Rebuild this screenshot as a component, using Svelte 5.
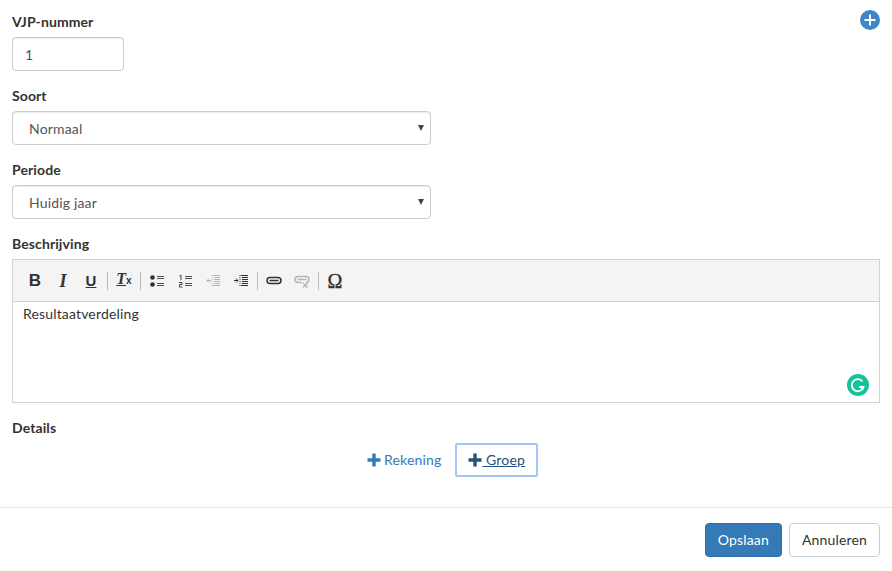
<script>
    let vjpNummer = $state('1');
    let soort = $state('Normaal');
    let periode = $state('Huidig jaar');
</script>

<div class="page">
    <button class="add-vjp" type="button" aria-label="Toevoegen">
        <svg viewBox="0 0 20 20" width="20" height="20">
            <circle cx="10" cy="10" r="10" fill="#3d87c9" />
            <path d="M10 4.5v11M4.5 10h11" stroke="#fff" stroke-width="2" />
        </svg>
    </button>

    <div class="form">
        <div class="form-group">
            <label for="nummer">VJP-nummer</label>
            <input id="nummer" class="control short" bind:value={vjpNummer} />
        </div>
        <div class="form-group">
            <label for="soort">Soort</label>
            <div class="select-wrap">
                <select id="soort" class="control wide" bind:value={soort}>
                    <option>Normaal</option>
                    <option>Afwijkend</option>
                </select>
            </div>
        </div>
        <div class="form-group">
            <label for="periode">Periode</label>
            <div class="select-wrap">
                <select id="periode" class="control wide" bind:value={periode}>
                    <option>Huidig jaar</option>
                    <option>Vorig jaar</option>
                </select>
            </div>
        </div>
        <div class="form-group">
            <div class="label">Beschrijving</div>
            <div class="editor">
                <div class="toolbar">
                    <span class="tool text-b">B</span>
                    <span class="tool text-i">I</span>
                    <span class="tool text-u">U</span>
                    <span class="sep"></span>
                    <span class="tool text-tx"><span class="tx-t">T</span><sub>x</sub></span>
                    <span class="sep"></span>
                    <span class="tool">
                        <svg viewBox="0 0 16 16" width="16" height="16">
                            <circle cx="3.500" cy="4.500" r="2.300" fill="#333" />
                            <circle cx="3.500" cy="11.500" r="2.300" fill="#333" />
                            <path d="M8 3.500h7M8 5.500h7M8 10.500h7M8 12.500h7" stroke="#555" stroke-width="1" />
                        </svg>
                    </span>
                    <span class="tool">
                        <svg viewBox="0 0 16 16" width="16" height="16">
                            <path d="M2.500 3l1.500-.8v5M2 9.500h3v2H2.500v2.500h3" stroke="#444" stroke-width="1" fill="none" />
                            <path d="M8 3.500h7M8 5.500h7M8 10.500h7M8 12.500h7" stroke="#555" stroke-width="1" />
                        </svg>
                    </span>
                    <span class="tool muted">
                        <svg viewBox="0 0 16 16" width="16" height="16">
                            <path d="M8 2.500h7M9 4.500h6M9 6.500h6M9 8.500h6M9 10.500h6M8 12.500h7" stroke="#444" stroke-width="1" />
                            <path d="M7 2v11" stroke="#444" stroke-width="1" stroke-dasharray="1 1" />
                            <path d="M6 7.500H2M4 5.500l-2 2 2 2" stroke="#444" stroke-width="1" fill="none" />
                        </svg>
                    </span>
                    <span class="tool">
                        <svg viewBox="0 0 16 16" width="16" height="16">
                            <path d="M8 2.500h7M9 4.500h6M9 6.500h6M9 8.500h6M9 10.500h6M8 12.500h7" stroke="#333" stroke-width="1" />
                            <path d="M7 2v11" stroke="#333" stroke-width="1" stroke-dasharray="1 1" />
                            <path d="M1 7.500h4M3 5.500l2 2-2 2" stroke="#333" stroke-width="1" fill="none" />
                        </svg>
                    </span>
                    <span class="sep"></span>
                    <span class="tool">
                        <svg viewBox="0 0 16 16" width="16" height="16">
                            <path d="M6 4.500H4a3 3 0 0 0 0 6h2M10 4.500h2a3 3 0 0 1 0 6h-2M6 4.500h4M6 10.500h4" stroke="#333" stroke-width="1.500" fill="none" />
                            <path d="M3.500 7.500h9" stroke="#333" stroke-width="1.500" />
                        </svg>
                    </span>
                    <span class="tool muted">
                        <svg viewBox="0 0 16 16" width="16" height="16">
                            <path d="M6 3.500H4a3 3 0 0 0 0 6h2M10 3.500h2a3 3 0 0 1 0 6M6 3.500h4M6 9.500h2" stroke="#444" stroke-width="1.500" fill="none" />
                            <path d="M3.500 6.500h9" stroke="#444" stroke-width="1.500" />
                            <path d="M9 10l4.500 4.500M13.500 10L9 14.500" stroke="#444" stroke-width="1.500" />
                        </svg>
                    </span>
                    <span class="sep"></span>
                    <span class="tool text-omega">Ω</span>
                </div>
                <div class="editor-body">
                    Resultaatverdeling
                    <span class="grammarly">
                        <svg viewBox="0 0 22 22" width="22" height="22">
                            <circle cx="11" cy="11" r="11" fill="#15c39a" />
                            <path d="M15.500 7.500a6 6 0 1 0 1 5.500h-4.500" stroke="#fff" stroke-width="1.800" fill="none" />
                            <path d="M13.500 14.500l3 1.500v-3z" fill="#fff" />
                        </svg>
                    </span>
                </div>
            </div>
        </div>
        <div class="details">
            <div class="label">Details</div>
            <div class="detail-actions">
                <button class="btn-link" type="button">
                    <svg viewBox="0 0 14 14" width="14" height="14">
                        <path d="M7 .5v13M.5 7h13" stroke="currentColor" stroke-width="3.400" />
                    </svg>
                    <span>Rekening</span>
                </button>
                <button class="btn-link focused" type="button">
                    <svg viewBox="0 0 14 14" width="14" height="14">
                        <path d="M7 .5v13M.5 7h13" stroke="currentColor" stroke-width="3.400" />
                    </svg>
                    <span>&nbsp;Groep</span>
                </button>
            </div>
        </div>
    </div>

    <div class="footer">
        <button class="btn primary" type="button">Opslaan</button>
        <button class="btn" type="button">Annuleren</button>
    </div>
</div>

<style>
    :global(body) {
        background: #fff;
        color: #333;
        font-family: Lato, "Liberation Sans", sans-serif;
        font-size: 14px;
        line-height: 20px;
        letter-spacing: .16px;
    }

    .page {
        position: relative;
        height: 571px;
        overflow: hidden;
    }

    .add-vjp {
        position: absolute;
        top: 10px;
        right: 12px;
        width: 20px;
        height: 20px;
        padding: 0;
        border: 0;
        background: none;
    }

    .add-vjp svg {
        display: block;
    }

    .form {
        padding: 12px 12px 30px;
    }

    .form-group {
        margin-bottom: 15px;
    }

    label,
    .label {
        display: block;
        margin-bottom: 5px;
        font-weight: 700;
        letter-spacing: .1px;
    }

    .control {
        display: block;
        box-sizing: border-box;
        height: 34px;
        padding: 6px 12px;
        border: 1px solid #ccc;
        border-radius: 4px;
        background: #fff;
        color: #555;
        font: inherit;
        letter-spacing: inherit;
        box-shadow: inset 0 1px 1px rgba(0, 0, 0, .075);
    }

    .short {
        width: 112px;
    }

    .wide {
        width: 419px;
        padding: 7px 12px 5px 16px;
        appearance: none;
    }

    .select-wrap {
        position: relative;
        width: 419px;
    }

    .select-wrap::after {
        content: "";
        position: absolute;
        top: 14px;
        right: 7px;
        border-style: solid;
        border-width: 6px 3px 0;
        border-color: #444 transparent transparent;
        pointer-events: none;
    }

    .editor {
        box-sizing: border-box;
        height: 144px;
        border: 1px solid #d1d1d1;
    }

    .toolbar {
        display: flex;
        align-items: center;
        box-sizing: border-box;
        height: 42px;
        padding: 0 8px;
        background: #f4f4f4;
        border-bottom: 1px solid #d1d1d1;
    }

    .tool {
        display: flex;
        align-items: center;
        justify-content: center;
        width: 28px;
        height: 24px;
        color: #333;
        letter-spacing: 0;
    }

    .muted {
        opacity: .35;
    }

    .sep {
        width: 1px;
        height: 18px;
        margin: 0 2px;
        background: #bcbcbc;
    }

    .text-b,
    .text-u {
        font-family: "Liberation Sans", sans-serif;
        font-size: 17px;
        font-weight: 700;
    }

    .text-i {
        font-family: "Liberation Serif", serif;
        font-size: 18px;
        font-style: italic;
        font-weight: 700;
    }

    .text-u {
        text-decoration: underline;
        font-size: 15px;
    }

    .text-tx {
        align-items: baseline;
        font-family: "Liberation Serif", serif;
        font-size: 16px;
        font-style: italic;
        font-weight: 700;
    }

    .tx-t {
        text-decoration: underline;
    }

    .text-tx sub {
        font-family: "Liberation Sans", sans-serif;
        font-size: 10px;
        font-style: normal;
        line-height: 0;
        vertical-align: -2px;
    }

    .text-omega {
        font-family: "Liberation Serif", serif;
        font-size: 20px;
        -webkit-text-stroke: .4px #333;
    }

    .editor-body {
        position: relative;
        padding: 2px 10px;
        height: 100px;
        box-sizing: border-box;
    }

    .grammarly {
        position: absolute;
        right: 10px;
        bottom: 6px;
        width: 22px;
        height: 22px;
    }

    .grammarly svg {
        display: block;
    }

    .detail-actions {
        display: flex;
        justify-content: center;
        gap: 1px;
    }

    .btn-link {
        display: flex;
        align-items: center;
        gap: 3px;
        box-sizing: border-box;
        height: 34px;
        padding: 6px 12px;
        border: 1px solid transparent;
        border-radius: 2px;
        background: none;
        color: #337ab7;
        font: inherit;
        letter-spacing: inherit;
    }

    .focused {
        color: #23527c;
        gap: 0;
        outline: 2px solid #a3c5fb;
        outline-offset: -2px;
    }

    .focused span {
        text-decoration: underline;
    }

    .footer {
        display: flex;
        justify-content: flex-end;
        gap: 7px;
        padding: 15px 12px;
        border-top: 1px solid #e5e5e5;
    }

    .btn {
        box-sizing: border-box;
        height: 34px;
        padding: 6px 12px;
        border: 1px solid #ccc;
        border-radius: 4px;
        background: #fff;
        color: #333;
        font: inherit;
        letter-spacing: inherit;
    }

    .primary {
        border-color: #2e6da4;
        background: #337ab7;
        color: #fff;
    }
</style>
